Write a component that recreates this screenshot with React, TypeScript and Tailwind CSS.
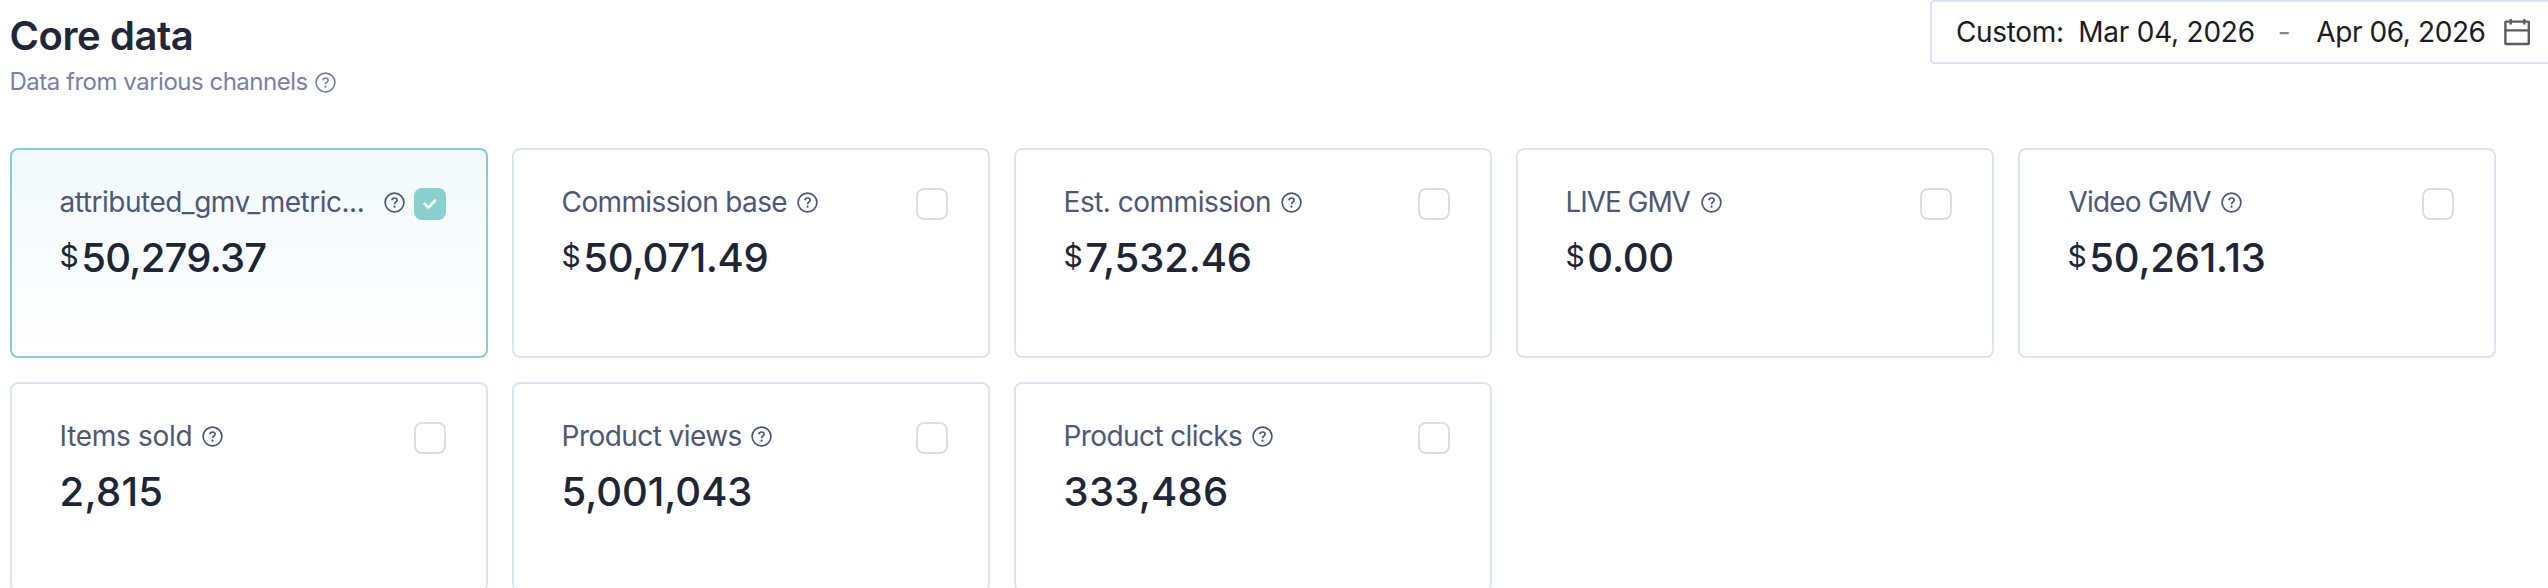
import { useState } from 'react';

type Metric = {
  label: string;
  labelClass: string;
  value: string;
  valueClass: string;
  currency?: boolean;
};

const METRICS: Metric[] = [
  { label: 'attributed_gmv_metric...', labelClass: 'tracking-[-0.49px] mr-[10px]', value: '50,279.37', valueClass: 'tracking-[-0.75px]', currency: true },
  { label: 'Commission base', labelClass: 'tracking-[-0.63px]', value: '50,071.49', valueClass: 'tracking-[-0.42px]', currency: true },
  { label: 'Est. commission', labelClass: 'tracking-[-0.5px]', value: '7,532.46', valueClass: 'tracking-[-0.12px]', currency: true },
  { label: 'LIVE GMV', labelClass: 'tracking-[-1.08px] mr-[2px]', value: '0.00', valueClass: 'tracking-[-0.21px]', currency: true },
  { label: 'Video GMV', labelClass: 'tracking-[-0.86px] ml-[1px] mr-[1px]', value: '50,261.13', valueClass: 'tracking-[-0.22px]', currency: true },
  { label: 'Items sold', labelClass: 'tracking-[-0.3px]', value: '2,815', valueClass: 'tracking-[0.3px]' },
  { label: 'Product views', labelClass: 'tracking-[-0.56px]', value: '5,001,043', valueClass: 'tracking-[-0.05px]' },
  { label: 'Product clicks', labelClass: 'tracking-[-0.61px]', value: '333,486', valueClass: 'tracking-[0.25px]' },
];

function HelpIcon() {
  return (
    <svg className="size-[21px] shrink-0" viewBox="0 0 21 21" fill="none" stroke="currentColor" strokeWidth="1.7">
      <circle cx="10.5" cy="10.5" r="9.4" />
      <path d="M7.9 8.3c.1-1.5 1.2-2.3 2.6-2.3s2.6.9 2.6 2.2c0 1.7-2.5 1.9-2.5 4.1" />
      <circle cx="10.5" cy="14.7" r="1.1" fill="currentColor" stroke="none" />
    </svg>
  );
}

function CalendarIcon() {
  return (
    <svg className="size-7 shrink-0" viewBox="0 0 28 28" fill="none" stroke="currentColor" strokeWidth="2.4">
      <rect x="2.4" y="3.6" width="23.4" height="22.4" rx="0.6" />
      <path d="M2.4 12.4h23.4M7.7 1v5.6M21.3 1v5.6" />
    </svg>
  );
}

function Checkbox({ checked, onToggle, label }: { checked: boolean; onToggle: () => void; label: string }) {
  return (
    <button
      type="button"
      role="checkbox"
      aria-checked={checked}
      aria-label={label}
      onClick={onToggle}
      className={
        checked
          ? 'mt-1 size-8 shrink-0 rounded-lg bg-[#89d0ce]'
          : 'mt-1 size-8 shrink-0 rounded-lg border-2 border-[#dedede] bg-white'
      }
    >
      {checked && (
        <svg className="size-8" viewBox="0 0 32 32" fill="none" stroke="#fff" strokeWidth="2.7" strokeLinecap="round" strokeLinejoin="round">
          <path d="M10.6 15.7l3.8 3.9 6.6-7" />
        </svg>
      )}
    </button>
  );
}

function MetricCard({ metric, checked, onToggle }: { metric: Metric; checked: boolean; onToggle: () => void }) {
  return (
    <div
      className={
        checked
          ? 'h-[210px] rounded-lg border-2 border-[#86cfce] bg-linear-to-b from-[#f1f9f9] via-[#f9fcfd] to-white pt-[34px] pr-10 pl-[47.6px]'
          : 'h-[210px] rounded-lg border-2 border-[#dde3f3] bg-white pt-[34px] pr-10 pl-[47.6px]'
      }
    >
      <div className="flex h-9 items-start justify-between">
        <div className="flex h-9 items-center gap-[9.5px] text-[28px] leading-9 whitespace-nowrap text-[#4f5775]">
          <span className={metric.labelClass}>{metric.label}</span>
          <HelpIcon />
        </div>
        <Checkbox checked={checked} onToggle={onToggle} label={metric.label} />
      </div>
      <div className="mt-[13px] flex h-12 text-[40px] leading-[49px] font-medium text-[#202536]">
        {metric.currency && <span className="mr-[2.5px] text-[30px] leading-[46px] font-normal">$</span>}
        <span className={metric.valueClass}>{metric.value}</span>
      </div>
    </div>
  );
}

export default function App() {
  const [selected, setSelected] = useState<string[]>([METRICS[0].label]);
  const toggle = (label: string) =>
    setSelected((s) => (s.includes(label) ? s.filter((l) => l !== label) : [...s, label]));

  return (
    <div className="h-[588px] w-[2548px] overflow-hidden bg-white font-['Inter','Liberation_Sans',sans-serif]">
      <header className="flex h-[148px] items-start justify-between">
        <div className="pt-[11px] pl-[9.5px]">
          <h1 className="text-[40px] leading-[49px] font-semibold tracking-[-0.43px] text-[#222738]">Core data</h1>
          <div className="mt-[6px] flex items-center gap-[7.5px] text-[24px] leading-8 tracking-[-0.49px] text-[#7a80a2]">
            <span>Data from various channels</span>
            <HelpIcon />
          </div>
        </div>
        <div className="flex h-16 w-[618px] items-center rounded-l-[4px] border-2 border-r-0 border-[#dde3f3] pl-[24px] text-[28px] leading-9 whitespace-nowrap text-[#1c1c1c]">
          <span className="tracking-[-0.33px]">Custom:</span>
          <span className="ml-[14.5px] tracking-[-0.23px]">Mar 04, 2026</span>
          <span className="ml-[23px] text-[#888]">-</span>
          <span className="ml-[25.5px] tracking-[-0.4px]">Apr 06, 2026</span>
          <span className="ml-[17px] text-[#5c5c5c]">
            <CalendarIcon />
          </span>
        </div>
      </header>
      <main className="grid grid-cols-[repeat(5,478px)] gap-6 pl-[10px]">
        {METRICS.map((m) => (
          <MetricCard key={m.label} metric={m} checked={selected.includes(m.label)} onToggle={() => toggle(m.label)} />
        ))}
      </main>
    </div>
  );
}
